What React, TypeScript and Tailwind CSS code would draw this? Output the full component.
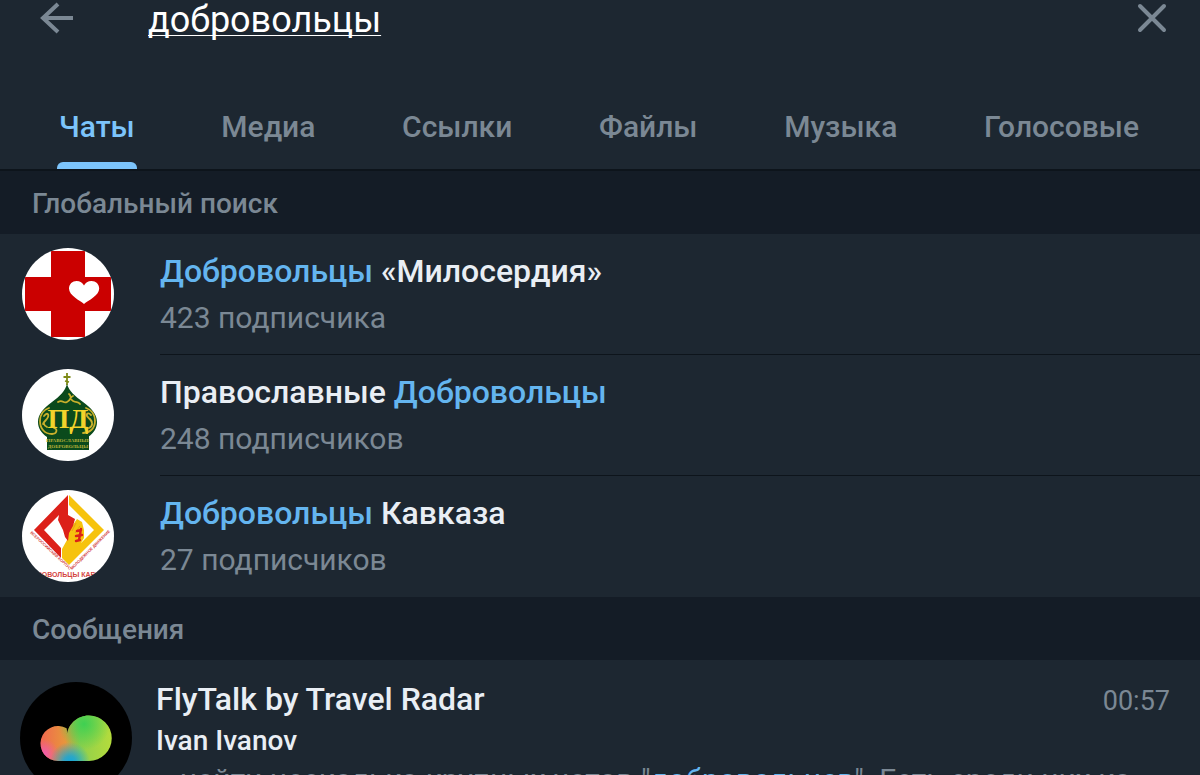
import React, { useState } from 'react';

const TABS = ['Чаты', 'Медиа', 'Ссылки', 'Файлы', 'Музыка', 'Голосовые'];

const MercyAvatar: React.FC = () => (
  <svg viewBox="0 0 92 92" className="h-[92px] w-[92px] rounded-full bg-white" aria-hidden="true">
    <path fill="#cb0000" d="M29 3h34v26h26v34h-26v26h-34v-26h-26v-34h26z" />
    <path
      fill="#fff"
      d="M62 56c-4-3.500-15-8.500-15-15.500 0-4.500 3.500-7.500 7.500-7.500 3.500 0 6.300 1.800 7.500 4.500 1.200-2.700 4-4.500 7.500-4.500 4.300 0 7.700 3 7.700 7.500 0 7-11 12-15.200 15.500z"
    />
  </svg>
);

const OrthodoxAvatar: React.FC = () => (
  <svg viewBox="0 0 92 92" className="h-[92px] w-[92px] rounded-full bg-white" aria-hidden="true">
    <path d="M45 4v12M41.500 8h7M43 12l4 1" stroke="#7d8a17" strokeWidth="1.800" fill="none" />
    <path
      fill="#0b4a1c"
      d="M45 15c2 7 8 12 16 18 8 6 14 12 14 20 0 6-3 11-9 15h-41c-6-4-9-9-9-15 0-8 6-14 14-20 8-6 13-11 15-18z"
    />
    <path fill="#0b4a1c" d="M25 67h42v14H25z" />
    <g fill="none" stroke="#c9b02c" strokeWidth="1.800" strokeLinecap="round">
      <path d="M36 33c5-3 5 2 9 0s3-5 6-6M47 25c3 2 0 5 4 7s5 0 7 3" />
      <path d="M27 39c-6 2-9 7-9 13 0 8 5 13 12 13 5 0 6-5 2-6M22 47c3-4 5-2 4 1s-4 4-5 7M25 58c-4-2-4-5-1-7" />
      <path d="M64 39c6 2 9 7 9 13 0 8-6 12-12 12M69 46c-3-3-5-1-4 1s5 4 5 7M67 59c4-2 4-6 1-9" />
    </g>
    <text x="46" y="59" textAnchor="middle" fontSize="28" fontWeight="700" fill="#f2d32b" className="font-['Liberation_Serif',serif]">
      ПД
    </text>
    <g fill="#b9b23a" className="font-['Liberation_Serif',serif]">
      <text x="46" y="73" textAnchor="middle" fontSize="5" fontWeight="700">ПРАВОСЛАВНЫЕ</text>
      <text x="46" y="79" textAnchor="middle" fontSize="5" fontWeight="700">ДОБРОВОЛЬЦЫ</text>
    </g>
  </svg>
);

const CaucasusAvatar: React.FC = () => (
  <svg viewBox="0 0 92 92" className="h-[92px] w-[92px] rounded-full bg-white" aria-hidden="true">
    <path fill="#f6c30d" d="M47 5L82 40 47 75 40 68V59L45 50 46 42 55 29 60 32 62 40 62 48 57 56 54 58 72 40 47 15z" />
    <path fill="#dc2019" d="M46 5L12 40l27 28V58L22 40l15-15-1 5 5 10 2 7 3 4 1-8 4-7 2-7-7-4z" />
    <path d="M54 33l-4 8M58 36l-5 7" stroke="#e59a1c" strokeWidth="1" />
    <path d="M59 39l-2 11M59 40l-4 1M60 45l-6 1M58 50l-4 1" stroke="#dc2019" strokeWidth="2.400" strokeLinecap="round" />
    <g fill="#d4453f" fontWeight="700" className="font-['Liberation_Sans',sans-serif]">
      <text fontSize="4" transform="translate(8 43) rotate(43)">ВСЕРОССИЙСКИЙ КОРПУС</text>
      <text fontSize="4" transform="translate(50 80) rotate(-45)">МОЛОДЕЖНОЕ ДВИЖЕНИЕ</text>
      <text x="46" y="87" textAnchor="middle" fontSize="7">ДОБРОВОЛЬЦЫ КАВКАЗА</text>
    </g>
  </svg>
);

const FlyTalkAvatar: React.FC = () => (
  <svg viewBox="0 0 112 112" className="h-28 w-28 rounded-full bg-black" aria-hidden="true">
    <defs>
      <linearGradient id="cloud-base" x1="0" x2="1" y1="0" y2="0">
        <stop offset="0" stopColor="#f0684f" />
        <stop offset="0.350" stopColor="#e8963c" />
        <stop offset="0.550" stopColor="#8fcf4c" />
        <stop offset="1" stopColor="#b5dc3c" />
      </linearGradient>
      <radialGradient id="cloud-green" gradientUnits="userSpaceOnUse" cx="64" cy="42" r="26">
        <stop offset="0" stopColor="#3fd052" />
        <stop offset="1" stopColor="#3fd052" stopOpacity="0" />
      </radialGradient>
      <radialGradient id="cloud-blue" gradientUnits="userSpaceOnUse" cx="50" cy="80" r="20">
        <stop offset="0" stopColor="#12a6dc" />
        <stop offset="0.300" stopColor="#12a6dc" stopOpacity="0.850" />
        <stop offset="1" stopColor="#12a6dc" stopOpacity="0" />
      </radialGradient>
      <radialGradient id="cloud-pink" gradientUnits="userSpaceOnUse" cx="24" cy="72" r="15">
        <stop offset="0" stopColor="#f05bb0" />
        <stop offset="1" stopColor="#f05bb0" stopOpacity="0" />
      </radialGradient>
      <path
        id="cloud"
        d="M38 79a17.500 17.500 0 1 1 8.500-32.800c1 3 .2 6 .3 9 0-12 10-21.700 22.200-21.700a22.700 22.700 0 0 1 0 45.500z"
      />
    </defs>
    <use href="#cloud" fill="url(#cloud-base)" />
    <use href="#cloud" fill="url(#cloud-green)" />
    <use href="#cloud" fill="url(#cloud-pink)" />
    <use href="#cloud" fill="url(#cloud-blue)" />
  </svg>
);

const Match: React.FC<{ children: React.ReactNode }> = ({ children }) => (
  <span className="text-[#64b5ef]">{children}</span>
);

const channels = [
  {
    id: 'mercy',
    avatar: <MercyAvatar />,
    title: <><Match>Добровольцы</Match> «Милосердия»</>,
    subtitle: '423 подписчика',
  },
  {
    id: 'orthodox',
    avatar: <OrthodoxAvatar />,
    title: <>Православные <Match>Добровольцы</Match></>,
    subtitle: '248 подписчиков',
  },
  {
    id: 'caucasus',
    avatar: <CaucasusAvatar />,
    title: <><Match>Добровольцы</Match> Кавказа</>,
    subtitle: '27 подписчиков',
  },
];

const SectionHeader: React.FC<{ title: string }> = ({ title }) => (
  <h2 className="bg-[#141c26] px-8 pt-[13px] pb-[10px] text-[28px] leading-10 font-medium text-[#7b8894]">{title}</h2>
);

export default function App() {
  const [query, setQuery] = useState('добровольцы');
  const [activeTab, setActiveTab] = useState('Чаты');

  return (
    <div className="flex h-screen flex-col overflow-hidden bg-[#1d2731] font-[Roboto,sans-serif] text-[#e9eef4]">
      <header className="border-b-2 border-[#0d141b]">
        <div className="flex h-[88px] items-start pr-8 pl-10">
          <button type="button" aria-label="Назад" className="mt-0.5 text-[#7b8894]">
            <svg viewBox="0 0 34 32" className="h-8 w-[34px]" fill="none" stroke="currentColor" strokeWidth="4">
              <path d="M33 16H3M18 2L3 16l15 14" />
            </svg>
          </button>
          <input
            type="text"
            aria-label="Поиск"
            spellCheck={false}
            value={query}
            onChange={(e) => setQuery(e.target.value)}
            className="ml-[74px] h-10 min-w-0 flex-1 bg-transparent text-[36px] leading-10 text-white underline decoration-1 underline-offset-[3px] outline-none [text-decoration-skip-ink:none]"
          />
          <button type="button" aria-label="Очистить" className="mt-0.5 text-[#7b8894]">
            <svg viewBox="0 0 32 32" className="h-8 w-8" fill="none" stroke="currentColor" strokeWidth="4" strokeLinecap="round">
              <path d="M4 4l24 24M28 4L4 28" />
            </svg>
          </button>
        </div>
        <nav className="flex justify-between pr-[59px] pl-[57px]">
          {TABS.map((tab) => (
            <button
              key={tab}
              type="button"
              onClick={() => setActiveTab(tab)}
              className={`flex flex-col px-0.5 text-[30px] leading-10 font-medium ${
                tab === activeTab ? 'text-[#7cc4fb]' : 'text-[#7b8894]'
              }`}
            >
              <span className="pt-[19px] pb-[15px]">{tab}</span>
              <span className={`-mx-0.5 h-[7px] self-stretch rounded-t-md ${tab === activeTab ? 'bg-[#7cc4fb]' : ''}`} />
            </button>
          ))}
        </nav>
      </header>

      <main>
        <SectionHeader title="Глобальный поиск" />
        <ul>
          {channels.map((channel) => (
            <li key={channel.id} className="group flex pl-[22px]">
              <div className="shrink-0 py-[14px]">{channel.avatar}</div>
              <div className="ml-[46px] flex-1 border-b border-[#0d141b] pt-[14px] pb-3 group-last:border-transparent">
                <h3 className="text-[32px] leading-[46px] font-medium">{channel.title}</h3>
                <p className="text-[30px] leading-[48px] text-[#7b8894]">{channel.subtitle}</p>
              </div>
            </li>
          ))}
        </ul>

        <SectionHeader title="Сообщения" />
        <article className="flex pt-[22px] pr-[30px] pl-5">
          <div className="shrink-0">
            <FlyTalkAvatar />
          </div>
          <div className="ml-6 min-w-0 flex-1">
            <div className="flex items-end justify-between">
              <h3 className="text-[32px] leading-[34px] font-medium">FlyTalk by Travel Radar</h3>
              <time className="text-[27px] leading-[30px] text-[#7b8894]">00:57</time>
            </div>
            <p className="pt-1 text-[28px] leading-[42px] font-medium">Ivan Ivanov</p>
            <p className="truncate text-[30px] leading-9 text-[#7b8894]">
              ...найти несколько крупных чатов "<Match>добровольцев</Match>". Есть среди них ко
            </p>
          </div>
        </article>
      </main>
    </div>
  );
}
